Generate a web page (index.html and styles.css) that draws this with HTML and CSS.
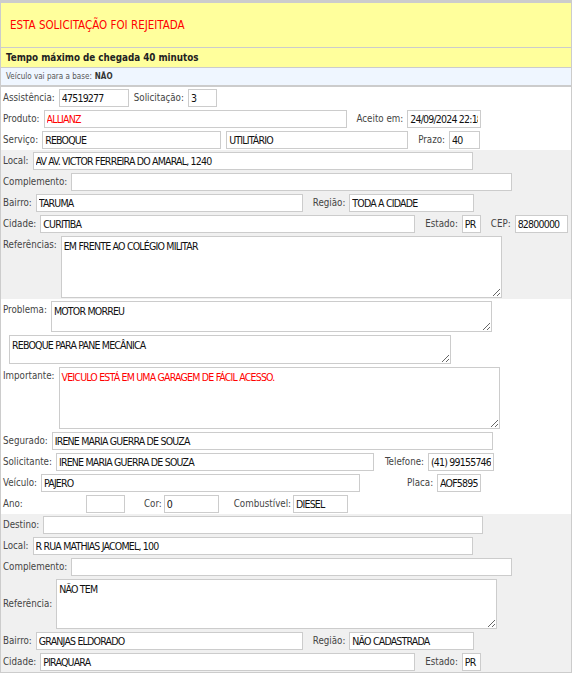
FILE: index.html
```html
<!DOCTYPE html>
<html lang="pt-BR">
  <head>
    <meta charset="UTF-8" />
    <link rel="stylesheet" href="styles.css">
    <title>Solicitação 47519277</title>
  </head>
  <body>
    <div class="ficha">
      <div class="aviso">ESTA SOLICITAÇÃO FOI REJEITADA</div>
      <div class="tempo">Tempo máximo de chegada 40 minutos</div>
      <div class="base">Veículo vai para a base: <b>NÃO</b></div>

      <div class="grupo">
        <div class="linha">
          <label>Assistência:</label><input class="campo w70" value="47519277" readonly>
          <label class="sep5">Solicitação:</label><input class="campo w29" value="3" readonly>
        </div>
        <div class="linha">
          <label>Produto:</label><input class="campo w303 vermelho" value="ALLIANZ" readonly>
          <label class="sep">Aceito em:</label><input class="campo w74" value="24/09/2024 22:18" readonly>
        </div>
        <div class="linha">
          <label>Serviço:</label><input class="campo w179" value="REBOQUE" readonly>
          <input class="campo w182 sep5" value="UTILITÁRIO" readonly>
          <label class="sep">Prazo:</label><input class="campo w31" value="40" readonly>
        </div>
      </div>

      <!-- local de origem -->
      <div class="grupo cinza">
        <div class="linha">
          <label>Local:</label><input class="campo w440" value="AV AV. VICTOR FERREIRA DO AMARAL, 1240" readonly>
        </div>
        <div class="linha">
          <label>Complemento:</label><input class="campo w441" value="" readonly>
        </div>
        <div class="linha">
          <label>Bairro:</label><input class="campo w267" value="TARUMA" readonly>
          <label class="sep">Região:</label><input class="campo w125" value="TODA A CIDADE" readonly>
        </div>
        <div class="linha">
          <label>Cidade:</label><input class="campo w375" value="CURITIBA" readonly>
          <label class="sep">Estado:</label><input class="campo w19" value="PR" readonly>
          <label class="sep">CEP:</label><input class="campo w53" value="82800000" readonly>
        </div>
        <div class="linha topo">
          <label>Referências:</label><textarea class="texto w441 h62" readonly>EM FRENTE AO COLÉGIO MILITAR</textarea>
        </div>
      </div>

      <div class="grupo">
        <div class="linha topo">
          <label>Problema:</label><textarea class="texto w441 h31" readonly>MOTOR MORREU</textarea>
        </div>
        <div class="linha recuo">
          <textarea class="texto w442 h29" readonly>REBOQUE PARA PANE MECÂNICA</textarea>
        </div>
        <div class="linha topo">
          <label>Importante:</label><textarea class="texto w441 h62 vermelho" readonly>VEICULO ESTÁ EM UMA GARAGEM DE FÁCIL ACESSO.</textarea>
        </div>
        <div class="linha">
          <label>Segurado:</label><input class="campo w441" value="IRENE MARIA GUERRA DE SOUZA" readonly>
        </div>
        <div class="linha">
          <label>Solicitante:</label><input class="campo w318" value="IRENE MARIA GUERRA DE SOUZA" readonly>
          <label class="sep11">Telefone:</label><input class="campo w66" value="(41) 991557460" readonly>
        </div>
        <div class="linha">
          <label>Veículo:</label><input class="campo w319" value="PAJERO" readonly>
          <label class="sep-placa">Placa:</label><input class="campo w44" value="AOF5895" readonly>
        </div>
        <div class="linha">
          <label class="cel-ano">Ano:</label><input class="campo w39" value="" readonly>
          <label class="sep-cor">Cor:</label><input class="campo w55" value="0" readonly>
          <label class="sep-comb">Combustível:</label><input class="campo w55" value="DIESEL" readonly>
        </div>
      </div>

      <!-- destino -->
      <div class="grupo cinza">
        <div class="linha">
          <label>Destino:</label><input class="campo w440" value="" readonly>
        </div>
        <div class="linha">
          <label>Local:</label><input class="campo w440" value="R RUA MATHIAS JACOMEL, 100" readonly>
        </div>
        <div class="linha">
          <label>Complemento:</label><input class="campo w441" value="" readonly>
        </div>
        <div class="linha">
          <label>Referência:</label><textarea class="texto w441 h50" readonly>NÃO TEM</textarea>
        </div>
        <div class="linha">
          <label>Bairro:</label><input class="campo w267" value="GRANJAS ELDORADO" readonly>
          <label class="sep">Região:</label><input class="campo w125" value="NÃO CADASTRADA" readonly>
        </div>
        <div class="linha">
          <label>Cidade:</label><input class="campo w375" value="PIRAQUARA" readonly>
          <label class="sep">Estado:</label><input class="campo w19" value="PR" readonly>
        </div>
      </div>
    </div>
  </body>
</html>
```

FILE: styles.css
```css
*,
*::after,
*::before {
  box-sizing: border-box;
}

body {
  margin: 0;
  font-family: "DejaVu Sans Condensed", "DejaVu Sans", sans-serif;
}

.ficha {
  width: 572px;
  border: 1px solid #ccc;
  border-top: 3px solid #ccc;
}

.aviso {
  height: 45px;
  display: flex;
  align-items: center;
  padding-left: 9px;
  background-color: #ffff9c;
  border-bottom: 1px solid #ccc;
  color: #f00;
  font-size: 11.5px;
}

.tempo {
  height: 20px;
  display: flex;
  align-items: center;
  padding-left: 5px;
  background-color: #ffff9c;
  border-bottom: 1px solid #ccc;
  color: #222;
  font-size: 9.75px;
  font-weight: bold;
}

.base {
  height: 19px;
  display: flex;
  align-items: center;
  gap: 3px;
  padding-left: 5px;
  background-color: #eff6ff;
  border-bottom: 2px solid #ccc;
  color: #555;
  font-size: 8px;
}

.base b {
  color: #333;
}

.grupo.cinza {
  background-color: #f0f0f0;
}

.linha {
  display: flex;
  align-items: center;
  padding: 1.5px 0 1.5px 2px;
}

.linha.topo {
  align-items: flex-start;
}

.linha.topo label {
  padding-top: 3px;
}

.linha.recuo {
  padding-left: 8px;
}

label {
  margin-right: 4px;
  color: #444;
  font-size: 9.7px;
  white-space: nowrap;
}

.campo,
.texto {
  border: 1px solid #ccc;
  background-color: #fff;
  color: #111;
  font-family: "DejaVu Sans Condensed", "DejaVu Sans", sans-serif;
  font-size: 10.5px;
  letter-spacing: -0.8px;
  outline: none;
}

.campo {
  height: 18px;
  padding: 0 2px;
}

.texto {
  padding: 3px 2px;
  margin: 0;
}

.vermelho {
  color: #f00;
}

.sep {
  margin-left: 10px;
}

.sep5 {
  margin-left: 5px;
}

.sep11 {
  margin-left: 11px;
}

.sep-placa {
  margin-left: 47px;
}

.cel-ano {
  width: 79px;
}

.sep-cor {
  margin-left: 19px;
  margin-right: 2px;
}

.sep-comb {
  margin-left: 15px;
  margin-right: 2px;
}

.w19 { width: 19px; }
.w29 { width: 29px; }
.w31 { width: 31px; }
.w39 { width: 39px; }
.w44 { width: 44px; }
.w53 { width: 53px; }
.w55 { width: 55px; }
.w66 { width: 66px; }
.w70 { width: 70px; }
.w74 { width: 74px; }
.w125 { width: 125px; }
.w179 { width: 179px; }
.w182 { width: 182px; }
.w267 { width: 267px; }
.w303 { width: 303px; }
.w318 { width: 318px; }
.w319 { width: 319px; }
.w375 { width: 375px; }
.w440 { width: 440px; }
.w441 { width: 441px; }
.w442 { width: 442px; }

.h29 { height: 29px; }
.h31 { height: 31px; }
.h50 { height: 50px; }
.h62 { height: 62px; }
```
